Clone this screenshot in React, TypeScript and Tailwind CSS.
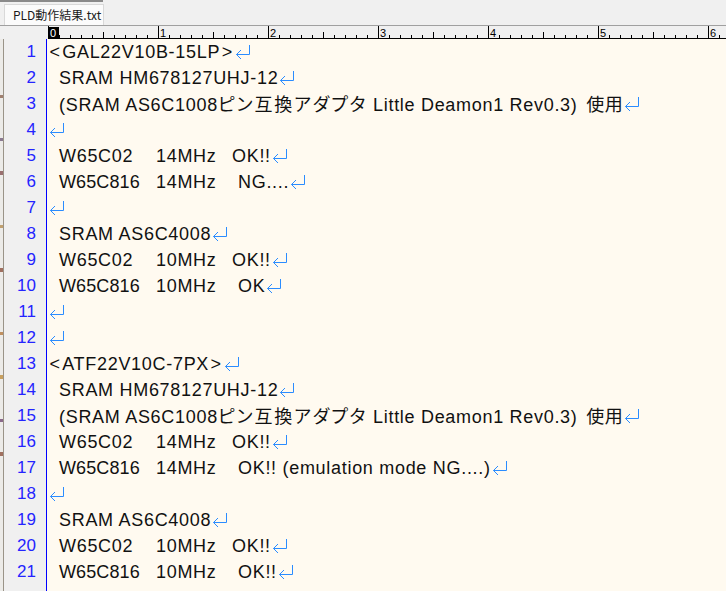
import React from "react";

// return mark drawn after each line
function Ret() {
  return (
    <svg width="16" height="15" viewBox="0 0 16 15" className="inline-block shrink-0 ml-[1px] -mt-[1px]">
      <path d="M14.5 1 V10.5 H1.5 M1.5 10.5 L6 6 M1.5 10.5 L6 15" fill="none" stroke="#2a8cff" strokeWidth="1" />
    </svg>
  );
}

function Ruler() {
  const ticks = Array.from({ length: 62 }, (_, i) => i);
  return (
    <svg width="678" height="12" className="block">
      {ticks.map((i) => {
        const x = i * 11 + 0.5;
        const h = i % 10 === 0 ? 12 : i % 5 === 0 ? 6 : 3;
        return <line key={i} x1={x} x2={x} y1={12 - h} y2={12} stroke="#000" strokeWidth="1" />;
      })}
      <rect x="1" y="1" width="10" height="11" fill="#000" />
      <text x="2" y="10.5" fontSize="11" fill="#fff" fontFamily="Liberation Sans, sans-serif">0</text>
      {[1, 2, 3, 4, 5, 6].map((n) => (
        <text key={n} x={n * 110 + 2} y="10.5" fontSize="11" fill="#000" fontFamily="Liberation Sans, sans-serif">
          {n}
        </text>
      ))}
    </svg>
  );
}

function Line({ children }: { children?: React.ReactNode }) {
  return <div className="h-[26px] flex items-center whitespace-pre">{children}</div>;
}

// Japanese runs use the CJK face with proportional kana
function Jp({ children }: { children: React.ReactNode }) {
  return <span className="font-['Noto_Sans_CJK_JP',sans-serif] text-[18px] tracking-[1.9px]">{children}</span>;
}

function Kanji({ children }: { children: React.ReactNode }) {
  return <span className="pl-[3px] font-['Noto_Sans_CJK_JP',sans-serif] text-[18px] tracking-[0.4px]">{children}</span>;
}

// angle brackets are drawn a little wider in this editor font
function Lt() {
  return <span className="px-[1.5px]">&lt;</span>;
}
function Gt() {
  return <span className="px-[1.5px]">&gt;</span>;
}

function Cpu({ name }: { name: string }) {
  return name === "W65C816" ? (
    <span className="pl-[11px] w-[108px] tracking-[0.1px]">{name}</span>
  ) : (
    <span className="pl-[11px] w-[108px]">{name}</span>
  );
}

export default function App() {
  const nums = Array.from({ length: 22 }, (_, i) => i + 1);
  return (
    <div className="w-[726px] h-[591px] overflow-hidden bg-[#f0f0f0] flex flex-col font-['Liberation_Sans','Noto_Sans_CJK_JP',sans-serif]">
      {/* tab strip */}
      <div className="h-[26px] shrink-0 relative border-b border-[#a0a0a0] flex items-end pl-[4px]">
        <div className="absolute left-0 top-0 w-[103px] h-[2px] bg-[#8a8a8a]" />
        <div className="h-[21px] w-[100px] bg-[#fbfbfb] border border-b-0 border-[#d9d9d9] flex items-center pl-[8px] text-[12px] text-[#1a1a1a] font-['Noto_Sans_CJK_JP',sans-serif]">
          PLD動作結果.txt
        </div>
      </div>

      {/* ruler */}
      <div className="h-[13px] shrink-0 flex">
        <div className="w-[48px]" />
        <div className="flex-1 border-b border-black">
          <Ruler />
        </div>
      </div>

      <div className="flex-1 flex overflow-hidden">
        {/* part of the window behind */}
        <div className="w-[3px] bg-[#ecebe8] flex flex-col">
          <div className="h-[56px]" />
          <div className="h-[3px] bg-[#a08070]" />
          <div className="h-[40px]" />
          <div className="h-[3px] bg-[#8a7a90]" />
          <div className="h-[30px]" />
          <div className="h-[4px] bg-[#9a7070]" />
          <div className="h-[50px]" />
          <div className="h-[3px] bg-[#c0a070]" />
          <div className="h-[40px]" />
          <div className="h-[4px] bg-[#a07060]" />
          <div className="h-[60px]" />
          <div className="h-[3px] bg-[#c09060]" />
          <div className="h-[40px]" />
          <div className="h-[4px] bg-[#c8a060]" />
          <div className="h-[40px]" />
          <div className="h-[3px] bg-[#8a6a8a]" />
          <div className="h-[30px]" />
          <div className="h-[4px] bg-[#a07060]" />
        </div>
        <div className="w-px bg-[#9a9488]" />

        {/* line numbers */}
        <div className="w-[42px] bg-[#f0f0f0] pr-[10px] text-[17px] text-[#2424ff]">
          {nums.map((n) => (
            <div key={n} className="h-[26px] flex items-center justify-end">
              {n}
            </div>
          ))}
        </div>
        <div className="w-px bg-[#0000ff]" />

        {/* text */}
        <div className="flex-1 bg-[#fffaf0] pl-[1px] text-[18px] tracking-[0.7px] text-[#111] [font-feature-settings:'palt']">
          <Line><Lt />GAL22V10B-15LP<Gt /><Ret /></Line>
          <Line><span className="pl-[11px]">SRAM HM678127UHJ-12</span><Ret /></Line>
          <Line><span className="pl-[11px]">(SRAM AS6C1008<Jp>ピン互換アダプタ</Jp> Little Deamon1 Rev0.3) <Kanji>使用</Kanji></span><Ret /></Line>
          <Line><Ret /></Line>
          <Line><Cpu name="W65C02" /><span className="w-[76px]">14MHz</span>OK!!<Ret /></Line>
          <Line><Cpu name="W65C816" /><span className="w-[82px]">14MHz</span>NG....<Ret /></Line>
          <Line><Ret /></Line>
          <Line><span className="pl-[11px]">SRAM AS6C4008</span><Ret /></Line>
          <Line><Cpu name="W65C02" /><span className="w-[76px]">10MHz</span>OK!!<Ret /></Line>
          <Line><Cpu name="W65C816" /><span className="w-[82px]">10MHz</span>OK<Ret /></Line>
          <Line><Ret /></Line>
          <Line><Ret /></Line>
          <Line><Lt />ATF22V10C-7PX<Gt /><Ret /></Line>
          <Line><span className="pl-[11px]">SRAM HM678127UHJ-12</span><Ret /></Line>
          <Line><span className="pl-[11px]">(SRAM AS6C1008<Jp>ピン互換アダプタ</Jp> Little Deamon1 Rev0.3) <Kanji>使用</Kanji></span><Ret /></Line>
          <Line><Cpu name="W65C02" /><span className="w-[76px]">14MHz</span>OK!!<Ret /></Line>
          <Line><Cpu name="W65C816" /><span className="w-[82px]">14MHz</span>OK!! (emulation mode NG....)<Ret /></Line>
          <Line><Ret /></Line>
          <Line><span className="pl-[11px]">SRAM AS6C4008</span><Ret /></Line>
          <Line><Cpu name="W65C02" /><span className="w-[76px]">10MHz</span>OK!!<Ret /></Line>
          <Line><Cpu name="W65C816" /><span className="w-[82px]">10MHz</span>OK!!<Ret /></Line>
          <Line />
        </div>
      </div>
    </div>
  );
}
